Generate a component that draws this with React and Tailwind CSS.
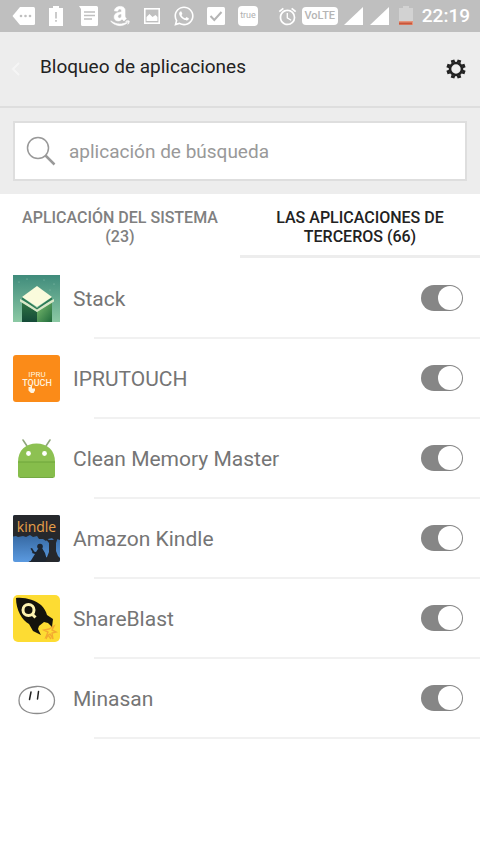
import { useState } from "react";
import { FaAmazon, FaWhatsapp } from "react-icons/fa";
import { MdAlarm } from "react-icons/md";

const apps = [
  { name: "Stack", Icon: StackIcon },
  { name: "IPRUTOUCH", Icon: IpruTouchIcon },
  { name: "Clean Memory Master", Icon: AndroidIcon },
  { name: "Amazon Kindle", Icon: KindleIcon },
  { name: "ShareBlast", Icon: ShareBlastIcon },
  { name: "Minasan", Icon: MinasanIcon },
];

function StackIcon() {
  return (
    <svg viewBox="0 0 47 47" className="size-full">
      <defs>
        <linearGradient id="stackSky" x1="0" y1="0" x2="0" y2="1">
          <stop offset="0" stopColor="#3f8b7b" />
          <stop offset="1" stopColor="#8cc9a4" />
        </linearGradient>
        <linearGradient id="stackLeft" x1="0" y1="0" x2="0" y2="1">
          <stop offset="0" stopColor="#2f7544" />
          <stop offset="1" stopColor="#144a38" />
        </linearGradient>
        <linearGradient id="stackRight" x1="0" y1="0" x2="1" y2="1">
          <stop offset="0" stopColor="#7fc071" />
          <stop offset="1" stopColor="#1f6a3c" />
        </linearGradient>
      </defs>
      <rect width="47" height="47" fill="url(#stackSky)" />
      <g fill="#8fc4b0">
        <circle cx="6" cy="7" r=".6" />
        <circle cx="14" cy="4" r=".6" />
        <circle cx="31" cy="5" r=".6" />
        <circle cx="41" cy="9" r=".6" />
        <circle cx="37" cy="15" r=".6" />
      </g>
      <path d="M9 27 24 37V47H9z" fill="url(#stackLeft)" />
      <path d="M39 27 24 37V47H39z" fill="url(#stackRight)" />
      <path d="M7 24 24 33 41 24V26.500L24 37 7 26.500z" fill="#d9e8c8" />
      <path d="M9 22 24 33 39 22V24.500L24 34.500 9 24.500z" fill="#2c7a55" />
      <path d="M9 22 24 11 39 22 24 32z" fill="#fafbdc" />
    </svg>
  );
}

function IpruTouchIcon() {
  return (
    <svg viewBox="0 0 47 47" className="size-full">
      <rect width="47" height="47" rx="3" fill="#fb8b18" />
      <text x="24" y="22" textAnchor="middle" fontFamily="Roboto, sans-serif" fontSize="8" fill="#fff3df">
        IPRU
      </text>
      <text x="24" y="31" textAnchor="middle" fontFamily="Roboto, sans-serif" fontSize="9" fontWeight="500" fill="#fff3df">
        TOUCH
      </text>
      <path
        d="M15.500 33.500v-1.500h2v-1h1.500v2.500h3v2l-1.500 2.500h-2.500l-2.500-2.500z"
        fill="#fff3df"
      />
    </svg>
  );
}

function AndroidIcon() {
  return (
    <svg viewBox="0 0 47 47" className="size-full">
      <path d="M10 5l4 6M37 5l-4 6" stroke="#8fa67c" strokeWidth="1.600" strokeLinecap="round" />
      <path d="M5 27C5 15 13 8.500 23.500 8.500S42 15 42 27z" fill="#8dc152" />
      <path d="M5 27h37v13.500a2.500 2.500 0 0 1-2.500 2.500h-32A2.500 2.500 0 0 1 5 40.500z" fill="#86bd4b" />
      <path d="M5 27h37" stroke="#6fa63a" strokeWidth="1.200" />
      <path d="M7 42.500h33" stroke="#74a944" />
      <circle cx="15.500" cy="18.500" r="2.400" fill="#fff" />
      <circle cx="31.500" cy="18.500" r="2.400" fill="#fff" />
    </svg>
  );
}

function KindleIcon() {
  return (
    <svg viewBox="0 0 47 47" className="size-full">
      <defs>
        <linearGradient id="kindleSky" x1="0" y1="0" x2="0" y2="1">
          <stop offset="0.400" stopColor="#34669f" />
          <stop offset="1" stopColor="#5b9ae0" />
        </linearGradient>
        <clipPath id="kindleClip">
          <rect width="47" height="47" rx="2" />
        </clipPath>
      </defs>
      <g clipPath="url(#kindleClip)">
        <rect width="47" height="47" fill="url(#kindleSky)" />
        {/* leaves */}
        <path d="M0 0h47v25l-3-1-2 2-3-3-4 1-2 2-3-2-4 0-2-3-4 1-3-2-4 2-3-1-5 1-2-1-5 1z" fill="#26282c" />
        {/* trunk and ground */}
        <path d="M31 22l5 3h6l3-3-2 6v8l2 5 2 2v5H14l3-2 12-1 5-3 2-5v-9z" fill="#26282c" />
        {/* reader */}
        <circle cx="27" cy="31.500" r="2.800" fill="#1d2530" />
        <path d="M25 34l4-1 3 5 2 7-3 2H17l5-8-3-1 1-1.500 3 .5z" fill="#1d2530" />
        <path d="m17.500 33.500 1.500-.5 2.500 4-1.500 1z" fill="#1d2530" />
        <text x="23.500" y="16.500" textAnchor="middle" fontFamily="Open Sans, sans-serif" fontSize="14" fontWeight="500" fill="#e8a04a">
          kindle
        </text>
      </g>
    </svg>
  );
}

function ShareBlastIcon() {
  return (
    <svg viewBox="0 0 47 47" className="size-full">
      <rect width="47" height="47" rx="5" fill="#fddc33" />
      <g fill="none" stroke="#f3aa30" strokeWidth="1.400">
        <path d="M31 35l4 2-2 5 4-3 3 5-1-6 4-1-4-2 2-4-5 3z" />
        <path d="M33 44l2-4 3 4" />
      </g>
      <path
        d="M3 3c9-1 19 2 25 7 3 3 5 6 6 10l6 4-1 8-4-4-4-1-5 4-1 3 3 6-8-4-4-7C9 25 3 15 3 3z"
        fill="#14130c"
      />
      <circle cx="15.500" cy="15" r="5.500" fill="#14130c" stroke="#fdf3b0" strokeWidth="3" />
      <path d="m19 19 3.500 3.500" stroke="#fdf3b0" strokeWidth="3" />
    </svg>
  );
}

function MinasanIcon() {
  return (
    <svg viewBox="0 0 47 47" className="size-full" fill="none" strokeLinecap="round">
      <path
        d="M23.500 11.500C33 11 41.500 17 41.500 25.500S34 38.500 24 38.500 6 34 6 25.500 13 12 23.500 11.500z"
        stroke="#8c8c8c"
        strokeWidth="1.300"
      />
      <path d="m18 17-1.500 7.500M25.500 16.500 24.500 24" stroke="#222" strokeWidth="1.500" />
    </svg>
  );
}

function StatusBar() {
  return (
    <div className="flex h-8 items-center justify-between bg-[#bfbfbf] pl-2 pr-[10px] text-white">
      <div className="flex items-center">
        <span className="flex w-8 justify-center">
          <svg viewBox="0 0 24 20" className="h-5 w-6" fill="#fff">
            <path d="M8 1h13.500A1.500 1.500 0 0 1 23 2.500v15a1.500 1.500 0 0 1-1.500 1.500H8L.5 10z" />
            <g fill="#bfbfbf">
              <circle cx="9" cy="10" r="1.300" />
              <circle cx="13.500" cy="10" r="1.300" />
              <circle cx="18" cy="10" r="1.300" />
            </g>
          </svg>
        </span>
        <span className="flex w-8 justify-center">
          <svg viewBox="0 0 14 20" className="h-5 w-[14px]" fill="#fff">
            <path d="M4 0h6v2h4v18H0V2h4z" />
            <path d="M6.200 6h1.600v6.500H6.200zM6.200 14h1.600v1.800H6.200z" fill="#bfbfbf" />
          </svg>
        </span>
        <span className="flex w-8 justify-center">
          <svg viewBox="0 0 19 20" className="h-5 w-[19px]" fill="#fff">
            <path d="M0 0h17.500A1.500 1.500 0 0 1 19 1.500v17a1.500 1.500 0 0 1-1.500 1.500h-14A1.500 1.500 0 0 1 2 18.500V3z" />
            <path d="M5 6h11M5 9.500h11M5 13h8" stroke="#bfbfbf" strokeWidth="1.500" />
          </svg>
        </span>
        <span className="flex w-8 justify-center">
          <FaAmazon className="size-[22px]" stroke="#fff" strokeWidth="14" />
        </span>
        <span className="flex w-8 justify-center">
          <svg viewBox="0 0 16 16" className="size-4" fill="none">
            <rect x=".8" y=".8" width="14.400" height="14.400" stroke="#fff" strokeWidth="1.600" />
            <path d="M2.500 13V9l3-3 3 3 3-2 2 2v4z" fill="#fff" />
          </svg>
        </span>
        <span className="flex w-8 justify-center">
          <FaWhatsapp className="size-[22px]" />
        </span>
        <span className="flex w-8 justify-center">
          <svg viewBox="0 0 18 18" className="size-[18px]" fill="none">
            <rect width="18" height="18" rx="1.500" fill="#fff" />
            <path d="m3.500 9 3.800 4L14.500 5" stroke="#b5b5b5" strokeWidth="2" />
          </svg>
        </span>
        <span className="flex w-8 justify-center">
          <span className="flex h-5 w-5 items-center justify-center rounded-sm bg-white text-[9px] text-[#b0b0b0]">true</span>
        </span>
      </div>

      <div className="flex items-center gap-1">
        <MdAlarm className="size-[21px]" />
        <span className="flex h-[18px] w-9 items-center justify-center rounded-sm bg-white text-[11px] font-medium text-[#b5b5b5]">
          VoLTE
        </span>
        <SignalIcon />
        <SignalIcon />
        <svg viewBox="0 0 24 20" className="h-5 w-6">
          <path d="M9 0h6v2h4v14H5V2h4z" fill="#d2d2d2" />
          <path d="M5 15h14v4H5z" fill="#e5957b" />
          <path d="M5 16.500h13v2H5z" fill="#c9553a" />
        </svg>
        <span className="text-[19px] font-medium leading-5">22:19</span>
      </div>
    </div>
  );
}

function SignalIcon() {
  return (
    <svg viewBox="0 0 22 20" className="h-5 w-[22px]">
      <path d="M21 1v18H2z" fill="#fff" />
    </svg>
  );
}

function GearIcon() {
  return (
    <svg viewBox="0 0 20 20" className="size-5" fill="none" stroke="#222">
      <circle cx="10" cy="10" r="6" strokeWidth="2.600" />
      <g strokeWidth="3.800">
        <path d="M7.400 3.700 6.500 1M12.600 3.700 13.500 1M7.400 16.300 6.500 19M12.600 16.300 13.500 19" />
        <path d="M3.700 7.400 1 6.500M3.700 12.600 1 13.500M16.300 7.400 19 6.500M16.300 12.600 19 13.500" />
      </g>
    </svg>
  );
}

function AppRow({ name, Icon }) {
  const [locked, setLocked] = useState(true);

  return (
    <li>
      <label className="flex h-20 items-center pl-[13px] pr-[17px]">
        <span className="size-[47px] shrink-0">
          <Icon />
        </span>
        <span className="ml-[13px] flex-1 pt-0.5 text-[21px] leading-7 text-[#757575]">{name}</span>
        <input
          type="checkbox"
          checked={locked}
          onChange={(e) => setLocked(e.target.checked)}
          className="peer sr-only"
        />
        <span className="flex h-[26px] w-[42px] rounded-full bg-[#868686] p-px peer-checked:justify-end">
          <span className="size-6 rounded-full bg-white" />
        </span>
      </label>
      <div className="-my-px ml-[94px] h-0.5 bg-[#f1f1f1]" />
    </li>
  );
}

function App() {
  const [tab, setTab] = useState("third");
  const [query, setQuery] = useState("");

  const tabClass = (id) =>
    `h-16 border-b-3 px-4 pt-1 text-center text-base font-medium leading-[19px] ${
      tab === id ? "border-[#ededed] text-[#222]" : "border-transparent text-[#808080]"
    }`;

  const visible = apps.filter((a) => a.name.toLowerCase().includes(query.toLowerCase()));

  return (
    <div className="min-h-screen bg-white font-[Roboto,sans-serif]">
      <StatusBar />

      <header className="flex h-[76px] items-center border-b-2 border-[#dedede] bg-[#ededed] pl-2 pr-[14px]">
        <button type="button" aria-label="Atrás" className="w-8">
          <svg viewBox="0 0 16 16" className="size-4" fill="none">
            <path d="M11 2 5 8l6 6" stroke="#f5f5f5" strokeWidth="2" />
          </svg>
        </button>
        <h1 className="flex-1 pb-1 text-[19px] leading-6 text-[#222]">Bloqueo de aplicaciones</h1>
        <button type="button" aria-label="Ajustes">
          <GearIcon />
        </button>
      </header>

      <div className="bg-[#ededed] p-[13px]">
        <label className="flex h-[60px] items-center border-2 border-[#dedede] bg-white pl-[11px]">
          <svg viewBox="0 0 30 30" className="size-[30px] shrink-0" fill="none" stroke="#999">
            <circle cx="12" cy="12" r="10.500" strokeWidth="1.500" />
            <path d="m19.500 19.500 9 9" strokeWidth="2.500" />
          </svg>
          <input
            type="text"
            value={query}
            onChange={(e) => setQuery(e.target.value)}
            aria-label="aplicación de búsqueda"
            placeholder="aplicación de búsqueda"
            className="ml-[13px] min-w-0 flex-1 pt-0.5 text-[19px] leading-6 text-[#222] outline-none placeholder:text-[#999]"
          />
        </label>
      </div>

      <div role="tablist" className="grid grid-cols-2">
        <button type="button" role="tab" aria-selected={tab === "system"} onClick={() => setTab("system")} className={tabClass("system")}>
          APLICACIÓN DEL SISTEMA (23)
        </button>
        <button type="button" role="tab" aria-selected={tab === "third"} onClick={() => setTab("third")} className={tabClass("third")}>
          LAS APLICACIONES DE TERCEROS (66)
        </button>
      </div>

      <ul>
        {visible.map((app) => (
          <AppRow key={app.name} name={app.name} Icon={app.Icon} />
        ))}
      </ul>
    </div>
  );
}

export default App;
